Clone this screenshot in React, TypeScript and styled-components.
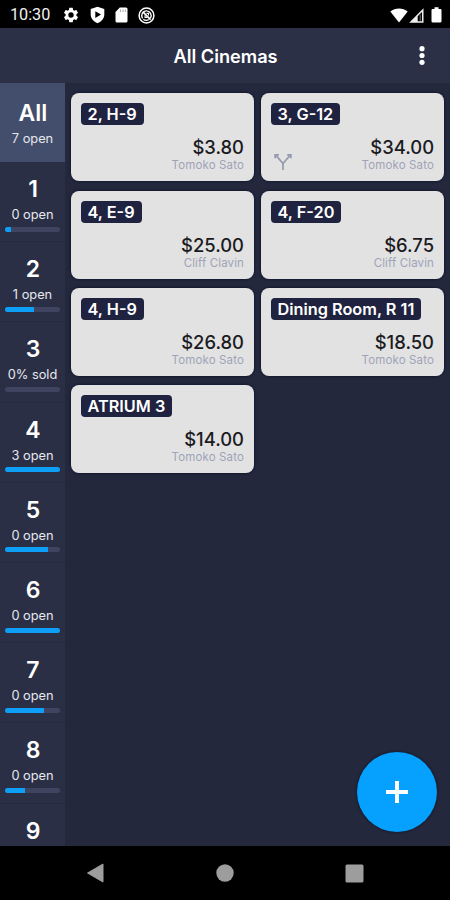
import React from "react";
import styled, { createGlobalStyle } from "styled-components";

const GlobalStyle = createGlobalStyle`
  * { box-sizing: border-box; }
  html, body { margin: 0; padding: 0; background: #000; overflow: hidden; }
  button { font: inherit; border: 0; padding: 0; background: none; color: inherit; }
`;

const Screen = styled.div`
  width: 450px;
  height: 900px;
  display: flex;
  flex-direction: column;
  position: relative;
  overflow: hidden;
  background: #23283d;
  font-family: Inter, "Liberation Sans", sans-serif;
  color: #fff;
`;

const StatusBar = styled.div`
  flex: 0 0 28px;
  display: flex;
  align-items: center;
  justify-content: space-between;
  padding: 2px 8px 0 10px;
  background: #000;
`;

const StatusGroup = styled.div<{ $gap: number }>`
  display: flex;
  align-items: center;
  gap: ${(p) => p.$gap}px;
`;

const Clock = styled.span`
  width: 42px;
  font: 400 16.2px/20px Roboto, sans-serif;
  color: #f0f0f0;
  white-space: nowrap;
`;

const Header = styled.header`
  flex: 0 0 55px;
  display: grid;
  grid-template-columns: 56px 1fr 56px;
  align-items: center;
  background: #2b3046;
`;

const Title = styled.h1`
  margin: 0;
  grid-column: 2;
  text-align: center;
  font-size: 18.2px;
  line-height: 24px;
  font-weight: 600;
  padding-left: 1px;
`;

const MenuButton = styled.button`
  height: 24px;
  display: flex;
  justify-content: center;
  align-items: center;
`;

const Body = styled.div`
  flex: 1 1 0;
  min-height: 0;
  display: flex;
`;

const Sidebar = styled.nav`
  flex: 0 0 65px;
  overflow: hidden;
  background: #2a2f45;
`;

const Tab = styled.div<{ $active?: boolean }>`
  height: ${(p) => (p.$active ? 79 : 80.2)}px;
  padding: ${(p) => (p.$active ? 16 : 13)}px 5px 0;
  display: flex;
  flex-direction: column;
  align-items: center;
  background: ${(p) => (p.$active ? "#424e6b" : "transparent")};
  border-bottom: ${(p) => (p.$active ? "0" : "1px solid #252a3e")};
`;

const TabName = styled.div`
  font-size: 23px;
  line-height: 28px;
  font-weight: 600;
  padding-left: 1px;
`;

const TabNote = styled.div`
  margin-top: 4px;
  font-size: 12.8px;
  line-height: 16px;
  color: #e6e8ee;
  white-space: nowrap;
`;

const Track = styled.div`
  width: 55px;
  height: 5px;
  margin-top: 3.6px;
  border-radius: 3px;
  overflow: hidden;
  background: #3f4560;
`;

const Fill = styled.div`
  height: 100%;
  background: #0d9ff8;
`;

const Grid = styled.main`
  flex: 1;
  display: grid;
  grid-template-columns: 183px 183px;
  grid-auto-rows: 88px;
  gap: 9.3px 7px;
  padding: 10.3px 6px;
  align-content: start;
`;

const Card = styled.article`
  display: flex;
  flex-direction: column;
  justify-content: space-between;
  padding: 10px 10px 9px;
  border-radius: 8px;
  background: #e2e2e2;
  box-shadow: 0 0 2px 1px #171a31;
`;

const Seat = styled.span`
  align-self: flex-start;
  height: 22px;
  padding: 0 7px 0 6.5px;
  border-radius: 4px;
  background: #20233f;
  font-size: 16.3px;
  line-height: 22px;
  font-weight: 600;
  white-space: nowrap;
`;

const CardFoot = styled.div`
  display: flex;
  align-items: flex-end;
  justify-content: space-between;
`;

const Amount = styled.div`
  margin-left: auto;
  text-align: right;
`;

const Price = styled.div`
  font-size: 18.4px;
  line-height: 21px;
  font-weight: 500;
  color: #1b1b1f;
`;

const Server = styled.div`
  font-size: 11.5px;
  line-height: 14px;
  letter-spacing: 0.13px;
  color: #a0a3b8;
  white-space: nowrap;
`;

const AddButton = styled.button`
  position: absolute;
  left: 356.5px;
  top: 751.5px;
  width: 80.5px;
  height: 80.5px;
  border-radius: 50%;
  display: grid;
  place-items: center;
  background: #06a0ff;
  box-shadow: 0 0 3px rgba(10, 12, 25, 0.8);
`;

const NavBar = styled.footer`
  flex: 0 0 54px;
  display: grid;
  grid-template-columns: 129.5px 129.5px 129.5px;
  justify-content: center;
  align-items: center;
  justify-items: center;
  background: #000;
`;

const GlyphSvg = styled.svg`
  display: block;
`;

const CardIcon = styled.svg`
  display: block;
  margin: 0 0 1px 3px;
`;

const GearIcon = () => (
  <GlyphSvg width="18" height="18" viewBox="0 0 24 24" fill="#fff">
    <path d="M19.14 12.94c.04-.3.06-.61.06-.94 0-.32-.02-.64-.07-.94l2.03-1.58a.49.49 0 0 0 .12-.61l-1.92-3.32a.49.49 0 0 0-.59-.22l-2.39.96a7 7 0 0 0-1.62-.94l-.36-2.54a.48.48 0 0 0-.48-.41h-3.84a.48.48 0 0 0-.47.41l-.36 2.54c-.59.24-1.13.57-1.62.94l-2.39-.96a.48.48 0 0 0-.59.22L2.74 8.87a.47.47 0 0 0 .12.61l2.03 1.58c-.05.3-.09.63-.09.94s.02.64.07.94l-2.03 1.58a.49.49 0 0 0-.12.61l1.92 3.32c.12.22.37.29.59.22l2.39-.96c.5.38 1.03.7 1.62.94l.36 2.54c.05.24.24.41.48.41h3.84c.24 0 .44-.17.47-.41l.36-2.54c.59-.24 1.13-.56 1.62-.94l2.39.96c.22.08.47 0 .59-.22l1.92-3.32a.47.47 0 0 0-.12-.61zM12 15.6a3.6 3.6 0 1 1 0-7.2 3.6 3.6 0 0 1 0 7.2z" />
  </GlyphSvg>
);

const ShieldIcon = () => (
  <GlyphSvg width="15" height="18" viewBox="0 0 15 18">
    <path d="M7.5.8 14.3 3v5.6c0 4-2.8 7.2-6.8 8.6C3.5 15.8.7 12.6.7 8.6V3z" fill="#fff" />
    <path d="M5.3 5.3 11 8.600l-5.700 3.300z" fill="#000" />
  </GlyphSvg>
);

const SdIcon = () => (
  <GlyphSvg width="13" height="16" viewBox="0 0 13 16">
    <path d="M4.8.5H11A1.5 1.5 0 0 1 12.5 2v12a1.500 1.500 0 0 1-1.500 1.500H2A1.500 1.500 0 0 1 .5 14V5z" fill="#fff" />
    <path d="M5.500 2.500v2.500M8 2.500v2.500M10.400 2.500v2.500" stroke="#999" strokeWidth=".8" />
  </GlyphSvg>
);

const SyncIcon = () => (
  <GlyphSvg width="17" height="17" viewBox="0 0 17 17" fill="none" stroke="#fff">
    <circle cx="8.500" cy="8.500" r="7.400" strokeWidth="1.500" />
    <path d="M4.600 11.300A4.700 4.700 0 0 1 8.500 3.900a4.700 4.700 0 0 1 3.900 7.200M5.300 12.300c1.700 1.200 4 1.200 5.500.2" strokeWidth="1.400" />
    <path d="m5.200 5.200 7.400 7.400" strokeWidth="1.700" />
    <path d="M7 8.200v2.200h2.400M8.500 6.400h2v2" strokeWidth="1.100" />
  </GlyphSvg>
);

const WifiIcon = () => (
  <GlyphSvg width="18" height="15" viewBox="0 0 18 15">
    <path d="M.3 3.500C5.300-.5 12.700-.5 17.700 3.500L9 14.600z" fill="#fff" />
  </GlyphSvg>
);

const SignalIcon = () => (
  <GlyphSvg width="15" height="15" viewBox="0 0 15 15">
    <path fillRule="evenodd" d="M14.500.3v14.400H.2zM13 4 8.700 8.300v5H13z" fill="#eee" />
    <path d="M10.600 7.400 12 6v7h-1.400z" fill="#555" />
  </GlyphSvg>
);

const BatteryIcon = () => (
  <GlyphSvg width="11" height="16" viewBox="0 0 11 16">
    <path d="M3.500.3h4v1.600h1.800c.7 0 1.200.5 1.200 1.200v11.200c0 .7-.5 1.200-1.200 1.200H1.700c-.7 0-1.200-.5-1.200-1.200V3.100c0-.7.5-1.200 1.200-1.200h1.800z" fill="#fff" />
  </GlyphSvg>
);

const MoreIcon = () => (
  <GlyphSvg width="6" height="21" viewBox="0 0 6 21" fill="#fff">
    <circle cx="3" cy="3.700" r="2.600" />
    <circle cx="3" cy="10.500" r="2.600" />
    <circle cx="3" cy="17.300" r="2.600" />
  </GlyphSvg>
);

const SplitIcon = () => (
  <CardIcon width="18" height="18" viewBox="0 0 18 18" fill="none" stroke="#9499ae" strokeWidth="1.700">
    <path d="M9 17v-6.500L2.400 2.900M9 10.500l6.600-7.600" />
    <path d="M1.200 5.200V1.900h3.600M16.800 5.200V1.900h-3.600" strokeWidth="1.800" />
  </CardIcon>
);

const tabs = [
  { name: "1", note: "0 open", sold: 11 },
  { name: "2", note: "1 open", sold: 53 },
  { name: "3", note: "0% sold", sold: 0 },
  { name: "4", note: "3 open", sold: 100 },
  { name: "5", note: "0 open", sold: 78 },
  { name: "6", note: "0 open", sold: 100 },
  { name: "7", note: "0 open", sold: 71 },
  { name: "8", note: "0 open", sold: 36 },
];

const orders = [
  { seat: "2, H-9", price: "$3.80", server: "Tomoko Sato" },
  { seat: "3, G-12", price: "$34.00", server: "Tomoko Sato", split: true },
  { seat: "4, E-9", price: "$25.00", server: "Cliff Clavin" },
  { seat: "4, F-20", price: "$6.75", server: "Cliff Clavin" },
  { seat: "4, H-9", price: "$26.80", server: "Tomoko Sato" },
  { seat: "Dining Room, R 11", price: "$18.50", server: "Tomoko Sato" },
  { seat: "ATRIUM 3", price: "$14.00", server: "Tomoko Sato" },
];

export default function App() {
  return (
    <Screen>
      <GlobalStyle />
      <StatusBar>
        <StatusGroup $gap={10}>
          <Clock>10:30</Clock>
          <GearIcon />
          <ShieldIcon />
          <SdIcon />
          <SyncIcon />
        </StatusGroup>
        <StatusGroup $gap={7}>
          <StatusGroup $gap={1}>
            <WifiIcon />
            <SignalIcon />
          </StatusGroup>
          <BatteryIcon />
        </StatusGroup>
      </StatusBar>
      <Header>
        <Title>All Cinemas</Title>
        <MenuButton aria-label="More">
          <MoreIcon />
        </MenuButton>
      </Header>
      <Body>
        <Sidebar>
          <Tab $active>
            <TabName>All</TabName>
            <TabNote>7 open</TabNote>
          </Tab>
          {tabs.map((t) => (
            <Tab key={t.name}>
              <TabName>{t.name}</TabName>
              <TabNote>{t.note}</TabNote>
              <Track>
                <Fill style={{ width: `${t.sold}%` }} />
              </Track>
            </Tab>
          ))}
          <Tab>
            <TabName>9</TabName>
          </Tab>
        </Sidebar>
        <Grid>
          {orders.map((o) => (
            <Card key={o.seat}>
              <Seat>{o.seat}</Seat>
              <CardFoot>
                {o.split && <SplitIcon />}
                <Amount>
                  <Price>{o.price}</Price>
                  <Server>{o.server}</Server>
                </Amount>
              </CardFoot>
            </Card>
          ))}
        </Grid>
      </Body>
      <AddButton aria-label="Add">
        <GlyphSvg width="24" height="24" viewBox="0 0 24 24" stroke="#fff" strokeWidth="4">
          <path d="M12 1v22M1 12h22" />
        </GlyphSvg>
      </AddButton>
      <NavBar>
        <GlyphSvg width="20" height="20" viewBox="0 0 20 20">
          <path d="M1.500 10 17 1v18z" fill="#9d9d9d" stroke="#9d9d9d" strokeLinejoin="round" />
        </GlyphSvg>
        <GlyphSvg width="18" height="18" viewBox="0 0 18 18">
          <circle cx="9" cy="9" r="8.700" fill="#9d9d9d" />
        </GlyphSvg>
        <GlyphSvg width="19" height="19" viewBox="0 0 19 19">
          <rect x=".5" y=".5" width="18" height="18" rx="1.500" fill="#9d9d9d" />
        </GlyphSvg>
      </NavBar>
    </Screen>
  );
}
